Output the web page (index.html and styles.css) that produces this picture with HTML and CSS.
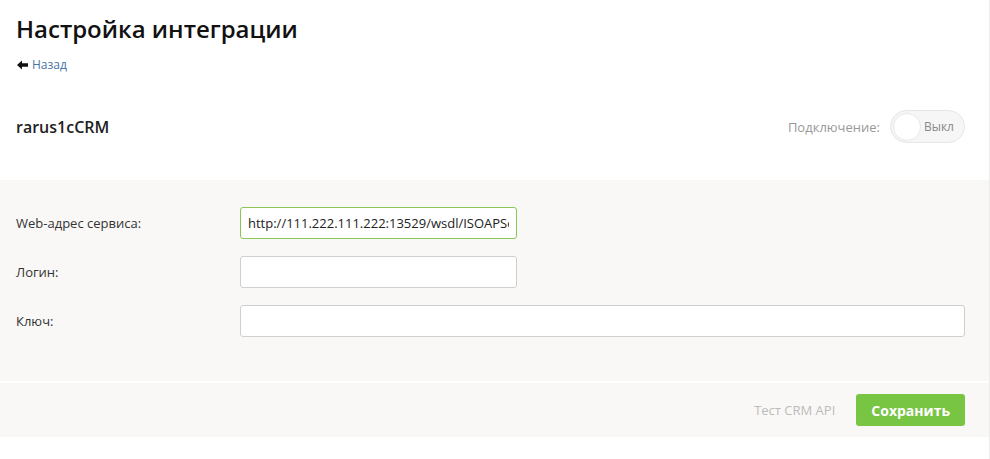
FILE: index.html
```html
<!DOCTYPE html>
<html lang="ru">
<head>
    <meta charset="UTF-8">
    <meta name="viewport" content="width=device-width, initial-scale=1.0">
    <title>Настройка интеграции</title>
    <link rel="stylesheet" href="styles.css">
</head>
<body>
    <div class="page">
        <div class="page-head">
            <h1>Настройка интеграции</h1>
            <a href="#" class="back-link">
                <svg class="back-icon" width="11" height="10" viewBox="0 0 11 10">
                    <path d="M0 5 L5 0.5 L5 3.3 L11 3.3 L11 6.7 L5 6.7 L5 9.5 Z" fill="#111"/>
                </svg>
                Назад
            </a>
        </div>

        <div class="integration-head">
            <div class="integration-name">rarus1cCRM</div>
            <div class="connection">
                <span class="connection-label">Подключение:</span>
                <div class="switch">
                    <span class="switch-knob"></span>
                    <span class="switch-text">Выкл</span>
                </div>
            </div>
        </div>

        <form class="settings">
            <div class="form-row">
                <label for="url">Web-адрес сервиса:</label>
                <input type="text" id="url" class="field field-short field-active" value="http://111.222.111.222:13529/wsdl/ISOAPService">
            </div>
            <div class="form-row">
                <label for="login">Логин:</label>
                <input type="text" id="login" class="field field-short">
            </div>
            <div class="form-row">
                <label for="key">Ключ:</label>
                <input type="text" id="key" class="field field-wide">
            </div>
        </form>

        <div class="actions">
            <a href="#" class="test-link">Тест CRM API</a>
            <button type="button" class="save-btn">Сохранить</button>
        </div>
    </div>
</body>
</html>
```

FILE: styles.css
```css
:root {
    --green: #78c443;
    --panel-bg: #f9f8f6;
    --text-color: #333;
}

body {
    margin: 0;
    padding: 0;
    font-family: 'Open Sans', 'Liberation Sans', Arial, sans-serif;
    color: var(--text-color);
    background: #fff;
}

.page {
    width: 989px;
    min-height: 459px;
    border-right: 1px solid #ececec;
}

.page-head {
    padding: 12px 24px 0 16px;
}

h1 {
    margin: 0;
    font-size: 24px;
    font-weight: 600;
    line-height: 34px;
    color: #111;
}

.back-link {
    display: inline-flex;
    align-items: center;
    gap: 4px;
    margin-top: 11px;
    font-size: 12px;
    line-height: 16px;
    color: #4a74a5;
    text-decoration: none;
}

.back-icon {
    display: block;
    margin-left: 1px;
}

.integration-head {
    display: flex;
    justify-content: space-between;
    align-items: center;
    padding: 35px 24px 37px 16px;
}

.integration-name {
    font-size: 16px;
    font-weight: 600;
    color: #222;
}

.connection {
    display: flex;
    align-items: center;
    gap: 10px;
}

.connection-label {
    font-size: 13px;
    color: #999;
}

.switch {
    display: flex;
    align-items: center;
    justify-content: space-between;
    box-sizing: border-box;
    width: 75px;
    height: 33px;
    padding: 0 10px 0 2px;
    border: 1px solid #e6e6e6;
    border-radius: 17px;
    background: #f6f6f6;
}

.switch-knob {
    width: 26px;
    height: 26px;
    border-radius: 50%;
    background: #fff;
    border: 1px solid #e8e8e8;
}

.switch-text {
    font-size: 12px;
    color: #888;
}

.settings {
    margin: 0;
    padding: 27px 24px 44px 16px;
    background: var(--panel-bg);
}

.form-row {
    display: flex;
    align-items: center;
    margin-bottom: 17px;
}

.form-row:last-child {
    margin-bottom: 0;
}

.form-row label {
    width: 224px;
    flex-shrink: 0;
    font-size: 13px;
    color: var(--text-color);
}

.field {
    box-sizing: border-box;
    height: 32px;
    padding: 0 7px;
    border: 1px solid #cfcfcf;
    border-radius: 3px;
    background: #fff;
    font-family: inherit;
    font-size: 13px;
    color: #222;
    outline: none;
}

.field-short {
    width: 277px;
}

.field-wide {
    width: 725px;
}

.field-active {
    border-color: #8cc657;
}

.actions {
    display: flex;
    justify-content: flex-end;
    align-items: center;
    gap: 21px;
    margin-top: 2px;
    padding: 11px 24px;
    background: var(--panel-bg);
}

.test-link {
    font-size: 13px;
    color: #bbb;
    text-decoration: none;
}

.save-btn {
    height: 32px;
    padding: 0 15px;
    border: none;
    border-radius: 3px;
    background: var(--green);
    color: #fff;
    font-family: inherit;
    font-size: 14px;
    font-weight: 700;
    cursor: pointer;
}
```
